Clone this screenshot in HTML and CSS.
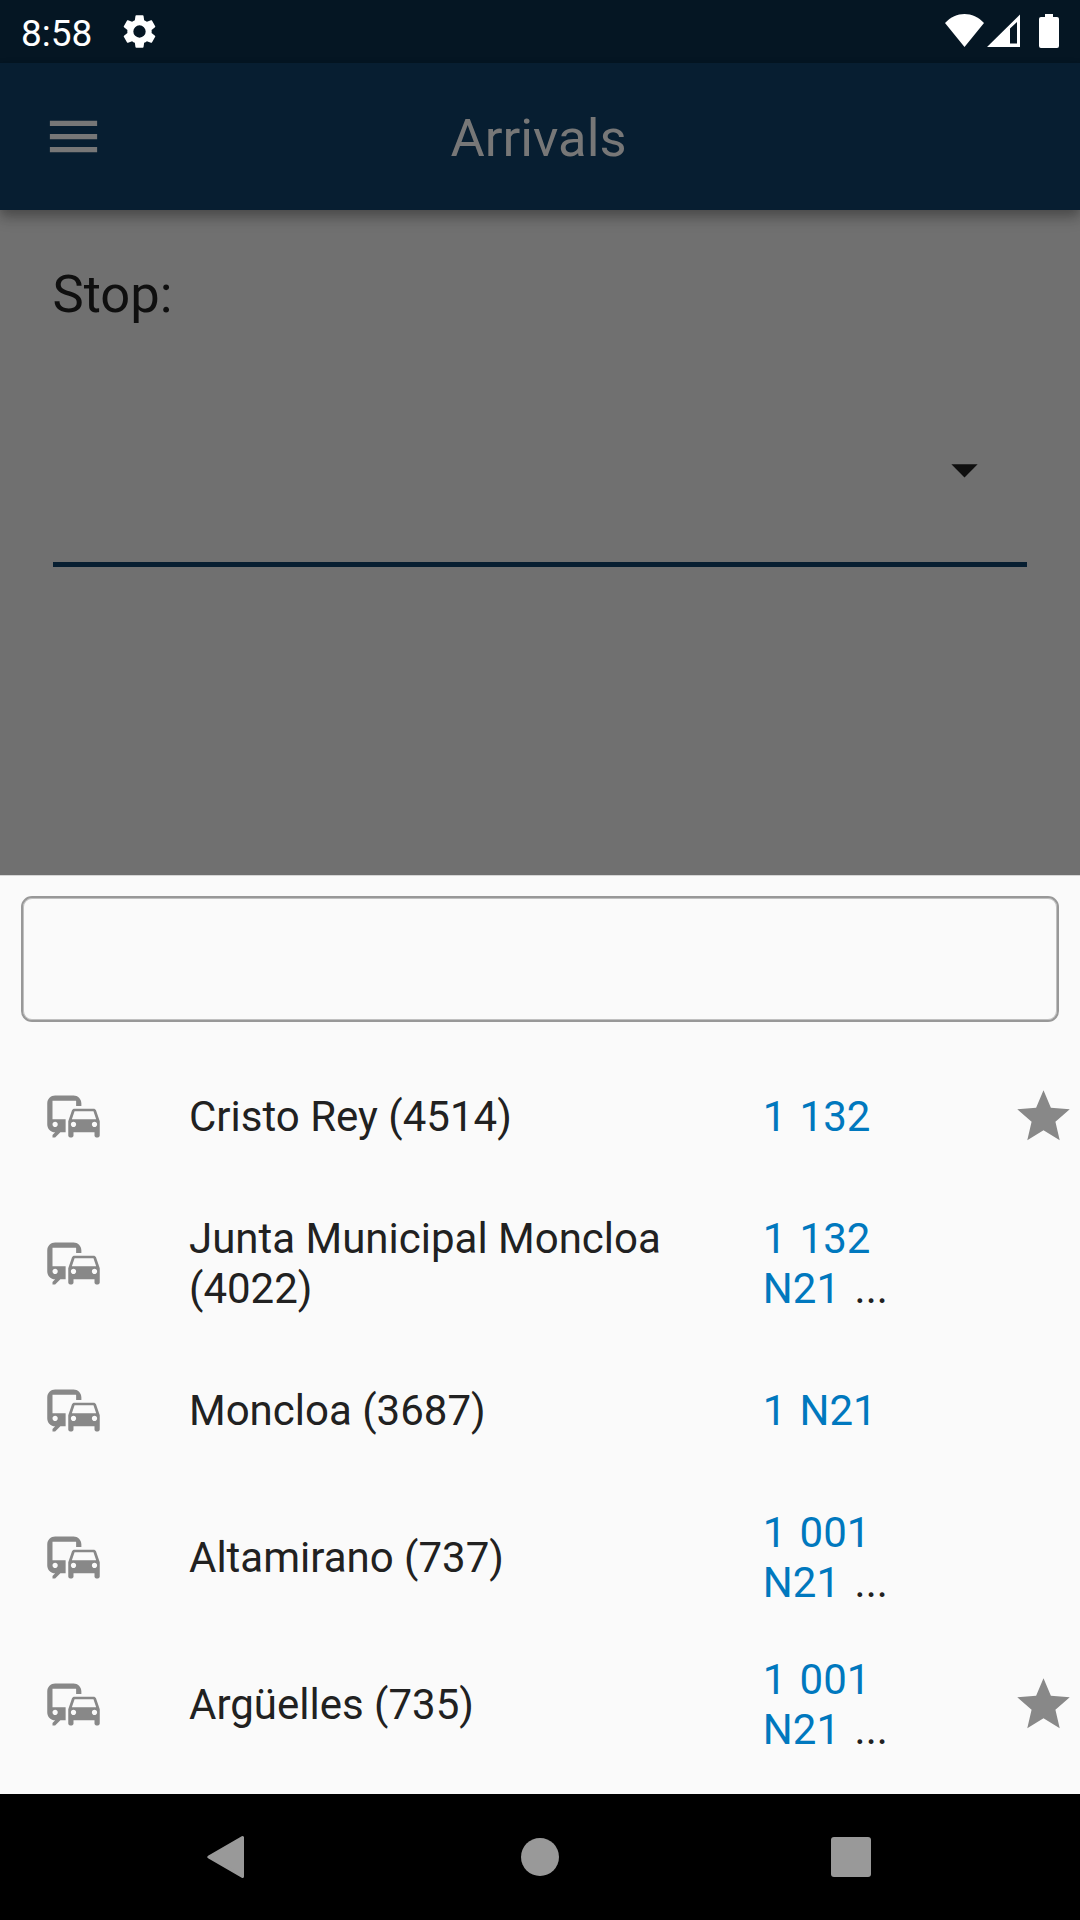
FILE: index.html
```html
<!DOCTYPE html>
<html lang="en">
<head>
<meta charset="utf-8">
<title>Arrivals</title>
<link rel="stylesheet" href="styles.css">
</head>
<body>
<svg class="defs" aria-hidden="true">
  <symbol id="commute" viewBox="0 0 24 24"><path d="M12 4H5C3.34 4 2 5.34 2 7v8c0 1.66 1.34 3 3 3l-1 1v1h1l2-2.03L9 18v-5H4V5.980L13 6v2h2V7c0-1.660-1.340-3-3-3zM5 14c.550 0 1 .450 1 1s-.450 1-1 1-1-.450-1-1 .450-1 1-1zM20.570 9.660C20.430 9.260 20.050 9 19.600 9h-7.190c-.460 0-.830.260-.980.660L10 13.770l.010 5.510c0 .380.310.720.690.720h.620c.380 0 .680-.380.680-.760V18h8v1.240c0 .380.310.760.690.760h.610c.380 0 .690-.340.690-.720l.010-1.370v-4.140l-1.430-4.110zM12.410 10h7.190l1.030 3h-9.250l1.030-3zM12 16c-.550 0-1-.450-1-1s.450-1 1-1 1 .450 1 1-.450 1-1 1zm8 0c-.550 0-1-.450-1-1s.450-1 1-1 1 .450 1 1-.450 1-1 1z"/></symbol>
  <symbol id="star" viewBox="0 0 24 24"><path d="M12 17.270L18.180 21l-1.640-7.030L22 9.240l-7.190-.610L12 2 9.190 8.630 2 9.240l5.460 4.730L5.820 21z"/></symbol>
</svg>
<div class="screen">
  <div class="status-bar">
    <span class="clock">8:58</span>
    <svg class="gear" viewBox="0 0 24 24"><path d="M19.430 12.980c.040-.320.070-.640.070-.980s-.030-.660-.070-.980l2.110-1.650c.190-.150.240-.420.120-.640l-2-3.460c-.120-.220-.390-.300-.610-.220l-2.490 1c-.520-.400-1.080-.730-1.690-.980l-.380-2.650C14.460 2.180 14.250 2 14 2h-4c-.250 0-.460.180-.490.420l-.380 2.650c-.610.250-1.170.590-1.690.980l-2.490-1c-.230-.090-.490 0-.610.220l-2 3.460c-.130.220-.070.490.120.640l2.110 1.650c-.040.320-.070.650-.070.980s.030.660.070.980l-2.110 1.650c-.190.150-.240.420-.120.640l2 3.460c.120.220.390.300.610.220l2.490-1c.520.400 1.080.730 1.690.980l.380 2.650c.030.240.240.420.490.420h4c.250 0 .460-.180.490-.420l.380-2.650c.610-.250 1.170-.590 1.690-.980l2.490 1c.230.090.490 0 .610-.220l2-3.460c.120-.220.070-.490-.120-.640l-2.110-1.650zM12 15.800a3.800 3.800 0 1 1 0-7.600 3.800 3.800 0 0 1 0 7.600z"/></svg>
    <svg class="signals" viewBox="0 0 114 34"><path d="M0 9C11-3 28-3 39 9L19.500 33z"/><path fill-rule="evenodd" d="M42 33L75 .500V33zM65 14.500V29.500H72V8z"/><path d="M100 0h8v3h4a2 2 0 0 1 2 2v27a2 2 0 0 1-2 2H96a2 2 0 0 1-2-2V5a2 2 0 0 1 2-2h4z"/></svg>
  </div>
  <header class="app-bar">
    <svg class="menu" viewBox="0 0 24 24"><path d="M3 18h18v-2H3v2zm0-5h18v-2H3v2zm0-7v2h18V6H3z"/></svg>
    <h1 class="title">Arrivals</h1>
  </header>
  <main class="content">
    <div class="label">Stop:</div>
    <div class="select"><svg class="caret" viewBox="0 0 24 24"><path d="M7 10l5 5 5-5z"/></svg></div>
  </main>
  <section class="sheet">
    <div class="search"></div>
    <ul class="stops">
      <li class="stop"><svg class="icon"><use href="#commute"/></svg><span class="name">Cristo Rey (4514)</span><div class="lines"><span>1</span><span>132</span></div><svg class="icon"><use href="#star"/></svg></li>
      <li class="stop"><svg class="icon"><use href="#commute"/></svg><span class="name">Junta Municipal Moncloa (4022)</span><div class="lines"><span>1</span><span>132</span><span>N21</span><span class="more">...</span></div></li>
      <li class="stop"><svg class="icon"><use href="#commute"/></svg><span class="name">Moncloa (3687)</span><div class="lines"><span>1</span><span>N21</span></div></li>
      <li class="stop"><svg class="icon"><use href="#commute"/></svg><span class="name">Altamirano (737)</span><div class="lines"><span>1</span><span>001</span><span>N21</span><span class="more">...</span></div></li>
      <li class="stop"><svg class="icon"><use href="#commute"/></svg><span class="name">Argüelles (735)</span><div class="lines"><span>1</span><span>001</span><span>N21</span><span class="more">...</span></div><svg class="icon"><use href="#star"/></svg></li>
    </ul>
  </section>
  <nav class="nav-bar">
    <svg viewBox="0 0 48 48"><path d="M37.500 4.500V43.500L3.800 24z" stroke-width="3" stroke-linejoin="round" class="back"/></svg>
    <svg viewBox="0 0 48 48"><circle cx="24" cy="24" r="19"/></svg>
    <svg viewBox="0 0 48 48"><rect x="4" y="4" width="40" height="40" rx="3"/></svg>
  </nav>
</div>
</body>
</html>
```
FILE: styles.css
```css
* { box-sizing: border-box; }
body { margin: 0; font-family: Roboto, "Liberation Sans", sans-serif; }
svg { display: block; flex: none; }
.defs { display: none; }
.screen { width: 1080px; height: 1920px; display: flex; flex-direction: column; background: #707070; overflow: hidden; }

.status-bar { flex: none; height: 63px; padding: 0 21px; display: flex; align-items: center; background: #051623; color: #fff; fill: #fff; }
.clock { font-size: 37px; line-height: 43px; padding-top: 3px; }
.gear { width: 39px; height: 39px; margin-left: 28px; }
.signals { width: 114px; height: 34px; margin: 0 0 1px auto; }

.app-bar { flex: none; height: 147px; padding: 0 43.500px 0 42px; display: grid; grid-template-columns: 63px 1fr 64.500px; align-items: center; background: #071e31; box-shadow: 0 5px 10px rgba(0,0,0,.22), 0 10px 13px rgba(0,0,0,.14); }
.menu { width: 63px; height: 63px; fill: #777; }
.title { margin: 0; padding-top: 2px; text-align: center; font-size: 52.5px; font-weight: 400; line-height: 62px; color: #777; }

.content { flex: none; height: 665px; padding: 53px 53px 0 52.500px; }
.label { font-size: 52.5px; line-height: 62px; color: #0f0f0f; }
.select { height: 242px; padding: 0 31px 0 0; display: flex; align-items: center; justify-content: flex-end; border-bottom: 5px solid #071e31; }
.caret { width: 63px; height: 63px; fill: #0f0f0f; margin-top: 51px; }

.sheet { flex: none; height: 919px; padding: 20px 21px 0; background: #fafafa; border-top: 1px solid #d6d6d6; }
.search { height: 126px; border: 2px solid #989898; border-radius: 11px; box-shadow: inset 0 0 0 1px #c0c0c0; }
.stops { list-style: none; margin: 21px -21px 0; padding: 0; }
.stop { height: 147px; display: grid; grid-template-columns: 63px 490px 165px 63px; column-gap: 84px; padding-left: 42px; align-items: center; font-size: 42px; line-height: 50px; color: #212121; }
.stop .icon { width: 63px; height: 63px; fill: #888; }
.lines { display: flex; flex-wrap: wrap; column-gap: 13.125px; margin-left: -.2px; color: #0078be; }
.more { margin-left: 1.5px; color: #212121; }

.nav-bar { flex: none; height: 126px; padding: 0 205px; display: flex; align-items: center; justify-content: space-between; background: #000; fill: #999; }
.nav-bar svg { width: 48px; height: 48px; }
.back { stroke: #999; }
```
